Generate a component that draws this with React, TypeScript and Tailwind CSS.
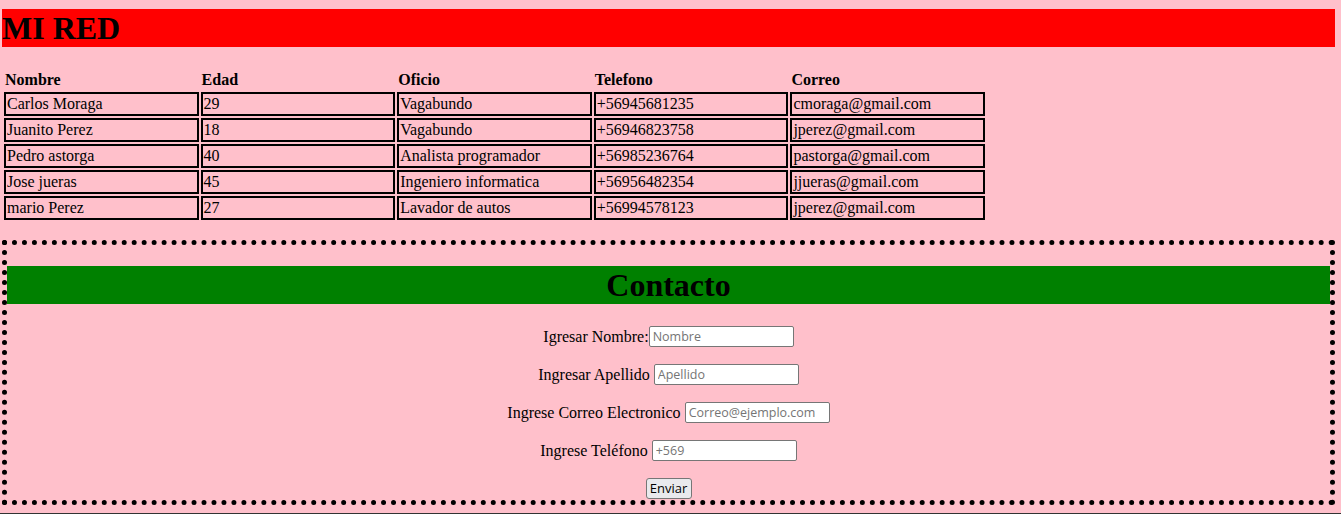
const personas = [
  { nombre: "Carlos Moraga", edad: "29", oficio: "Vagabundo", telefono: "+56945681235", correo: "cmoraga@gmail.com" },
  { nombre: "Juanito Perez", edad: "18", oficio: "Vagabundo", telefono: "+56946823758", correo: "jperez@gmail.com" },
  { nombre: "Pedro astorga", edad: "40", oficio: "Analista programador", telefono: "+56985236764", correo: "pastorga@gmail.com" },
  { nombre: "Jose jueras", edad: "45", oficio: "Ingeniero informatica", telefono: "+56956482354", correo: "jjueras@gmail.com" },
  { nombre: "mario Perez", edad: "27", oficio: "Lavador de autos", telefono: "+56994578123", correo: "jperez@gmail.com" },
];

const campos = [
  { label: "Igresar Nombre:", placeholder: "Nombre", space: false },
  { label: "Ingresar Apellido", placeholder: "Apellido", space: true },
  { label: "Ingrese Correo Electronico", placeholder: "Correo@ejemplo.com", space: true },
  { label: "Ingrese Teléfono", placeholder: "+569", space: true },
];

function Tabla() {
  const th = "p-[1px] text-left font-bold leading-[18px]";
  const td = "border-2 border-black p-[1px] leading-[18px]";
  return (
    <table className="mt-[21px] w-[985px] table-fixed border-separate border-spacing-[2px] text-[16px]">
      <thead>
        <tr>
          <th className={th}>Nombre</th>
          <th className={th}>Edad</th>
          <th className={th}>Oficio</th>
          <th className={th}>Telefono</th>
          <th className={th}>Correo</th>
        </tr>
      </thead>
      <tbody>
        {personas.map((p) => (
          <tr key={p.nombre}>
            <td className={td}>{p.nombre}</td>
            <td className={td}>{p.edad}</td>
            <td className={td}>{p.oficio}</td>
            <td className={td}>{p.telefono}</td>
            <td className={td}>{p.correo}</td>
          </tr>
        ))}
      </tbody>
    </table>
  );
}

function Contacto() {
  return (
    <section className="mt-[18px] w-[1333px] border-[5px] border-dotted border-black pb-[1px]">
      <h2 className="mt-[21px] h-[38px] bg-[#008000] text-center text-[32px] font-bold leading-[38px]">Contacto</h2>
      <form className="mt-[22px] flex flex-col items-center gap-[17px]">
        {campos.map((c) => (
          <div key={c.label} className="flex h-[21px] items-center justify-center">
            <label className={c.space ? "mr-[4px] text-[16px] leading-[18px]" : "text-[16px] leading-[18px]"}>{c.label}</label>
            <input
              type="text"
              placeholder={c.placeholder}
              className="h-[21px] w-[145px] rounded-[2px] border border-[#767676] bg-white px-[3px] font-['Open_Sans',sans-serif] text-[12.5px] placeholder:text-[#757575]"
            />
          </div>
        ))}
        <button
          type="button"
          className="h-[21px] w-[46px] rounded-[3px] border border-[#767676] bg-[#e9e9ed] font-['Open_Sans',sans-serif] text-[13px] leading-[19px] text-black"
        >
          Enviar
        </button>
      </form>
    </section>
  );
}

export default function App() {
  return (
    <div className="min-h-screen bg-[#ffc0cb] pt-[9px] font-['Liberation_Serif','Times_New_Roman',serif] text-black">
      <div className="ml-[2px]">
        <h1 className="h-[38px] w-[1333px] bg-[#ff0000] text-[32px] font-bold leading-[38px]">MI RED</h1>
        <Tabla />
        <Contacto />
      </div>
      <div className="mt-[8px] h-[1px] bg-[#333333]" />
      <div className="h-[40px]" />
    </div>
  );
}
